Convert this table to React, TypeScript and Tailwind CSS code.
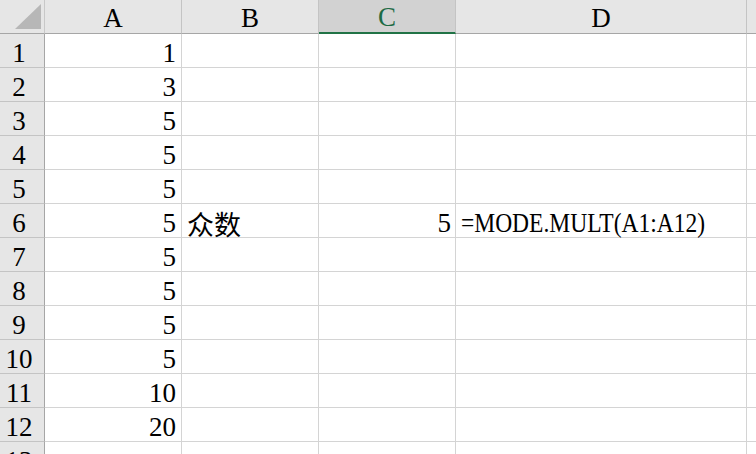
import React from 'react'

const values = [1, 3, 5, 5, 5, 5, 5, 5, 5, 5, 10, 20]

function Corner() {
  return (
    <div className="w-[45px] h-[34px] shrink-0 bg-[#e6e6e6] border-r border-b border-r-[#c8c8c8] border-b-[#a6a6a6] relative">
      <svg width="44" height="33" className="absolute left-0 top-0">
        <polygon points="41,4 41,29 15,29" fill="#b7b7b7" />
      </svg>
    </div>
  )
}

function ColHead({ label, width, active }: { label: string; width: string; active?: boolean }) {
  return (
    <div
      className={`${width} h-[34px] shrink-0 flex items-end justify-center leading-none text-[27px] border-r border-r-[#c4c4c4] ${
        active
          ? 'bg-[#d2d2d2] border-b-2 border-b-[#217346] text-[#1e6b45]'
          : 'bg-[#e6e6e6] border-b border-b-[#a6a6a6] text-black'
      }`}
    >
      <span className="pb-[1px] font-['Liberation_Serif',serif]">{label}</span>
    </div>
  )
}

function Row({ n, a, b, c, d }: { n: number; a?: number; b?: string; c?: number; d?: string }) {
  return (
    <div className="flex">
      <div className="w-[45px] h-[34px] shrink-0 bg-[#e6e6e6] border-r border-b border-r-[#a6a6a6] border-b-[#c4c4c4] flex items-end justify-center pr-[6px] leading-none text-[27px]">
        <span className="font-['Liberation_Serif',serif]">{n}</span>
      </div>
      <div className="w-[137px] h-[34px] shrink-0 border-r border-b border-[#d4d4d4] flex items-end justify-end pr-[5px] leading-none text-[27px]">
        <span className="font-['Liberation_Serif',serif]">{a}</span>
      </div>
      <div className="w-[137px] h-[34px] shrink-0 border-r border-b border-[#d4d4d4] flex items-end pl-[5px] leading-none text-[27px]">
        <span className="font-['Noto_Sans_CJK_SC',sans-serif]">{b}</span>
      </div>
      <div className="w-[137px] h-[34px] shrink-0 border-r border-b border-[#d4d4d4] flex items-end justify-end pr-[4px] leading-none text-[27px]">
        <span className="font-['Liberation_Serif',serif]">{c}</span>
      </div>
      <div className="w-[291px] h-[34px] shrink-0 border-r border-b border-[#d4d4d4] flex items-end pl-[5px] leading-none text-[27px] whitespace-nowrap">
        {d && <span className="inline-block origin-left scale-x-[0.87] font-['Liberation_Serif',serif]">{d}</span>}
      </div>
      <div className="flex-1 h-[34px] border-b border-[#d4d4d4]" />
    </div>
  )
}

export default function App() {
  return (
    <div className="w-[756px] h-[454px] overflow-hidden bg-white text-black">
      <div className="flex">
        <Corner />
        <ColHead label="A" width="w-[137px]" />
        <ColHead label="B" width="w-[137px]" />
        <ColHead label="C" width="w-[137px]" active />
        <ColHead label="D" width="w-[291px]" />
        <div className="flex-1 h-[34px] bg-[#e6e6e6] border-b border-b-[#a6a6a6]" />
      </div>
      {values.map((v, i) => (
        <Row
          key={i}
          n={i + 1}
          a={v}
          b={i === 5 ? '众数' : undefined}
          c={i === 5 ? 5 : undefined}
          d={i === 5 ? '=MODE.MULT(A1:A12)' : undefined}
        />
      ))}
      <Row n={13} />
    </div>
  )
}
